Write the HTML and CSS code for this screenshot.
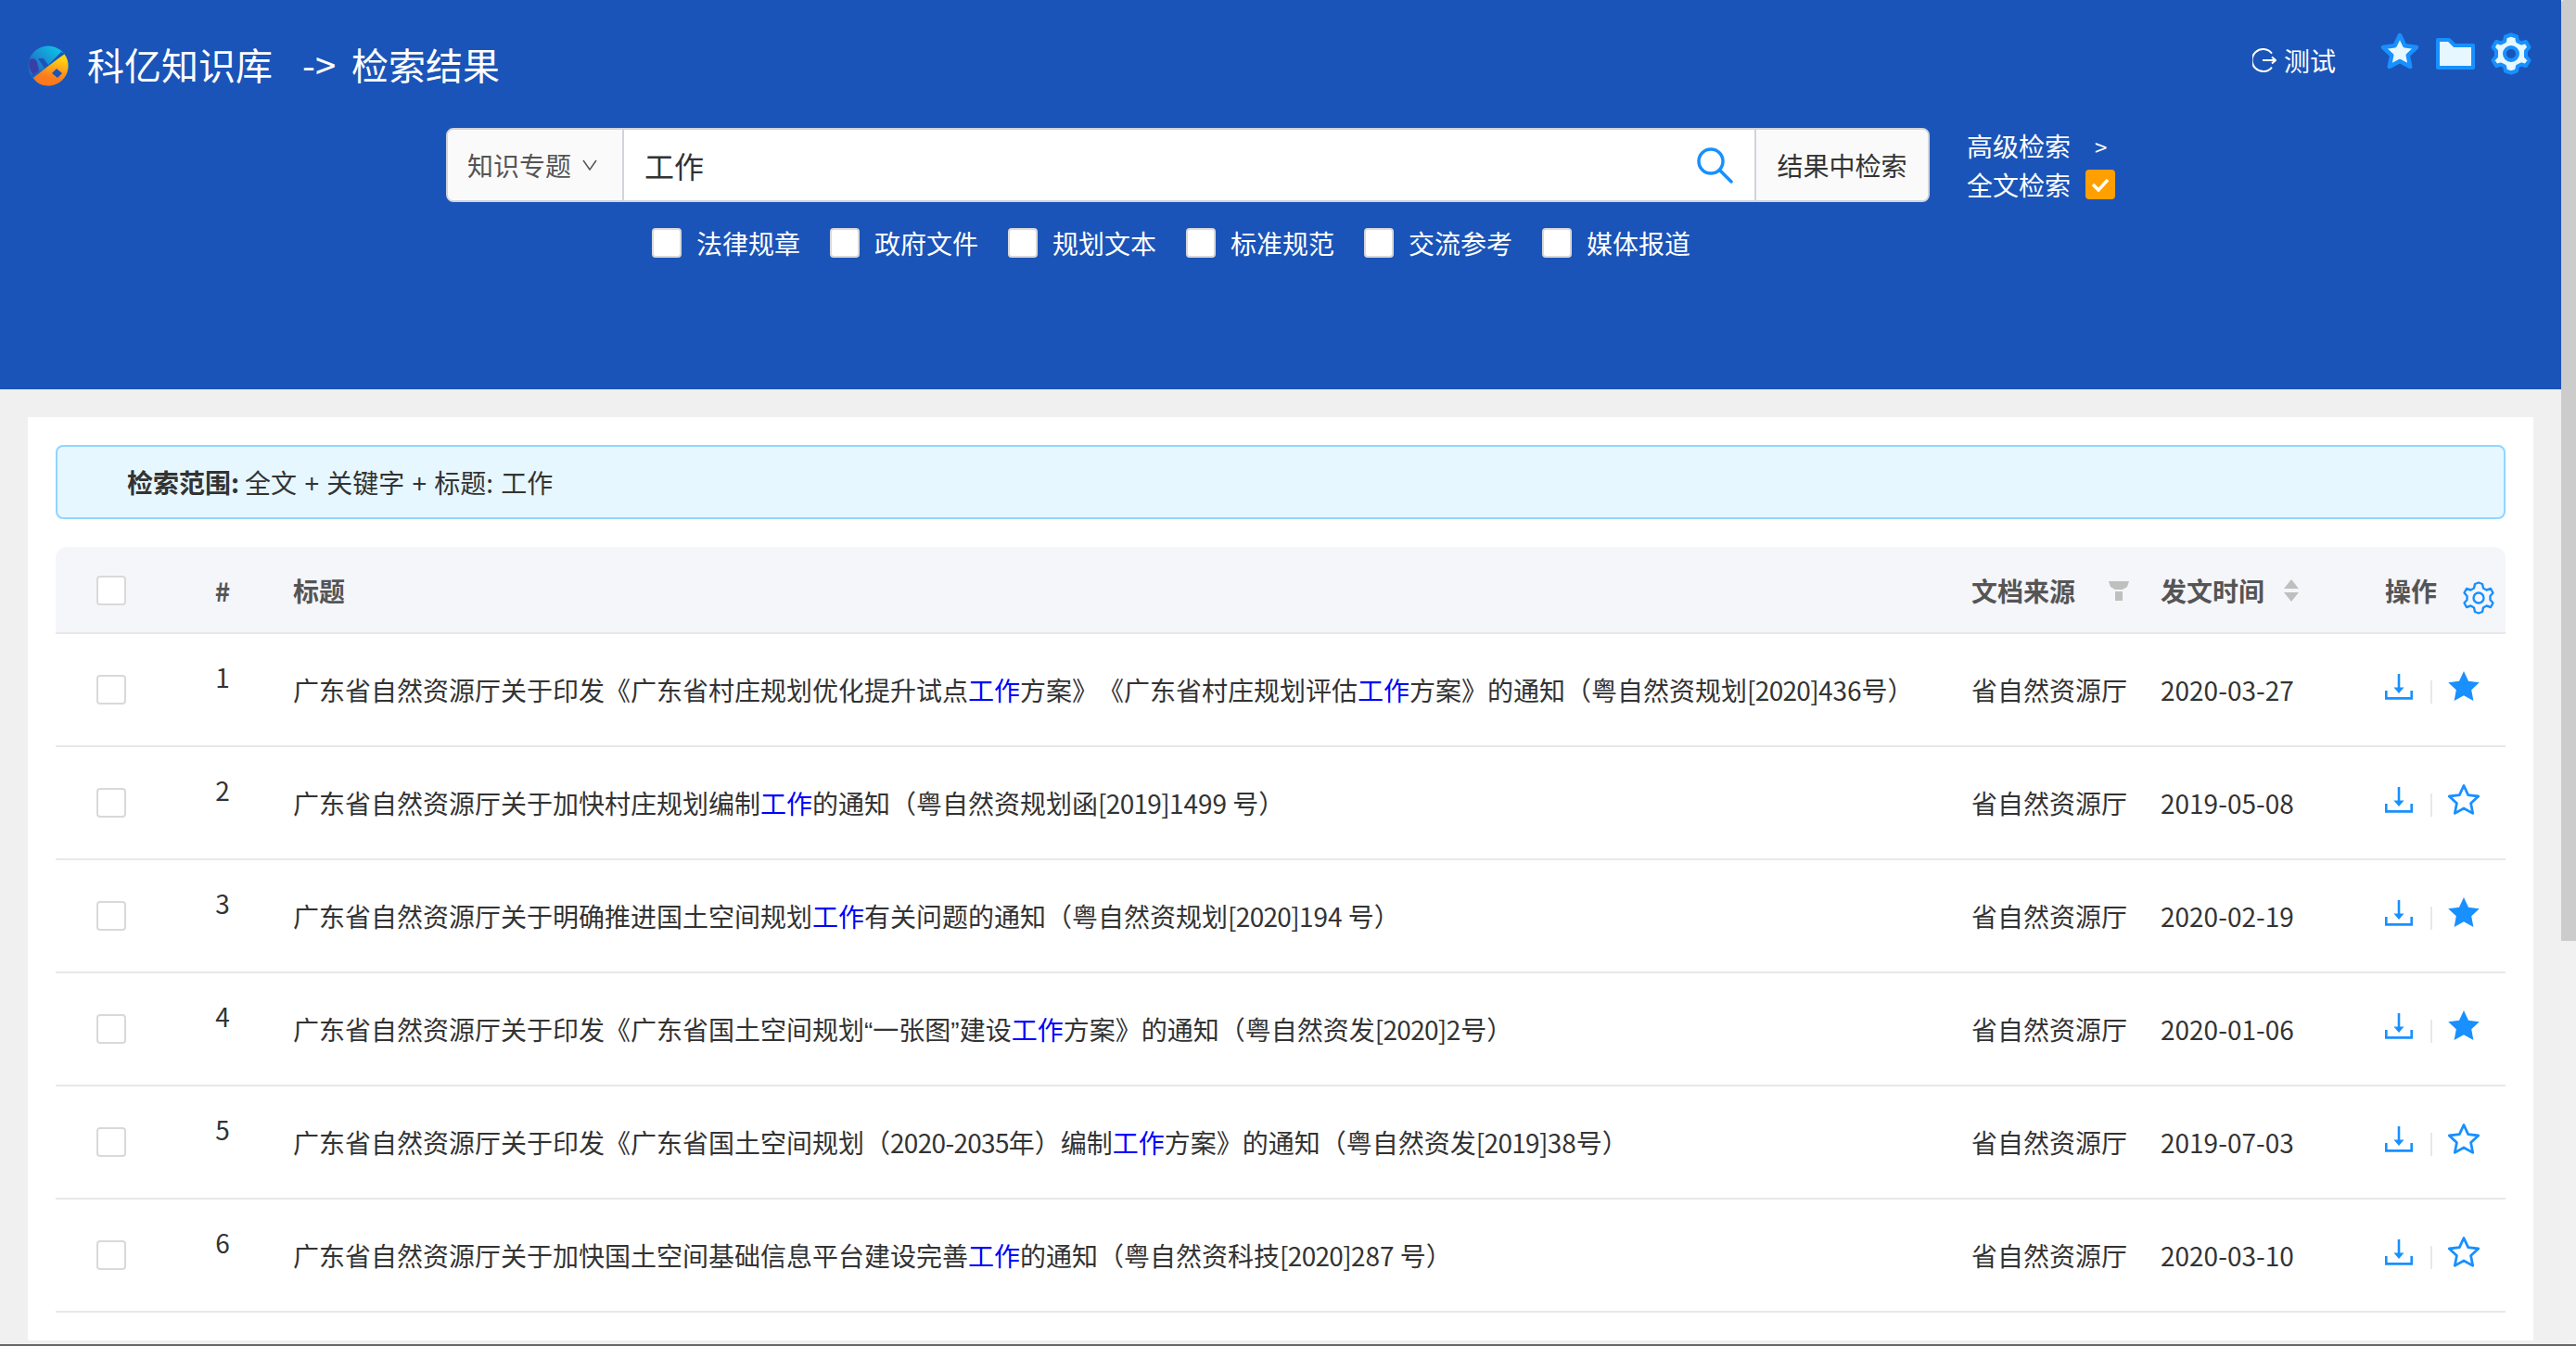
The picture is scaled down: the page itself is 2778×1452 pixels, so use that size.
FILE: index.html
```html
<!DOCTYPE html>
<html lang="zh-CN">

<head>
    <meta charset="utf-8">
    <title>科亿知识库 检索结果</title>
    <link rel="stylesheet" href="styles.css">
</head>

<body>
    <svg class="defs" width="0" height="0">
        <symbol id="dl" viewBox="0 0 30 28">
            <path d="M15 0V18" fill="none" stroke="currentColor" stroke-width="2.6"/>
            <path d="M9.5 14.5H20.5L15 21Z" fill="currentColor"/>
            <path d="M1.3 18V26.4H28.7V18" fill="none" stroke="currentColor" stroke-width="2.6"/>
        </symbol>
        <symbol id="star" viewBox="0 0 36 34">
            <path d="M18 2.5L22.7 12.6 33.7 14 25.6 21.5 27.7 32.4 18 27 8.3 32.4 10.4 21.5 2.3 14 13.3 12.6Z" fill="none" stroke="currentColor" stroke-width="2.8" stroke-linejoin="round"/>
        </symbol>
        <symbol id="starFill" viewBox="0 0 36 34">
            <path d="M18 1L23 11.7 34.800 13.200 26.200 21.200 28.400 33 18 27.200 7.600 33 9.800 21.200 1.200 13.200 13 11.700Z" fill="currentColor"/>
        </symbol>
    </svg>

    <div class="page">
        <div class="main">
            <header class="topbar">
                <div class="headRow">
                    <div class="brand">
                        <svg class="logo" viewBox="0 0 44 44">
                            <defs>
                                <linearGradient id="lgTop" x1="1" y1="0" x2="0" y2="1">
                                    <stop offset="0" stop-color="#08d8f0"/>
                                    <stop offset="0.7" stop-color="#1f6fc4"/>
                                </linearGradient>
                                <linearGradient id="lgBot" x1="0.7" y1="0" x2="0.4" y2="1">
                                    <stop offset="0.1" stop-color="#ffd412"/>
                                    <stop offset="0.75" stop-color="#fb7a1e"/>
                                </linearGradient>
                            </defs>
                            <circle cx="22" cy="22" r="21.500" fill="url(#lgTop)"/>
                            <path d="M39 9C42.500 13 43.500 18 43.500 22 43.500 34 34 43.500 22 43.500 14.500 43.500 9 40 6 35Z" fill="url(#lgBot)"/>
                            <path d="M1.500 16C5 13 8 14 10 18L12 27 6 31C2 28 0.500 22 1.500 16Z" fill="#3a3fa8"/>
                            <path d="M11 14L17 14 22 21 36 7 40 9 5 34 4 32 18 25Z" fill="#1b54b8"/>
                            <path d="M31 25L37 30 32 35 26 30Z" fill="#1b54b8"/>
                        </svg>
                        <span class="brandName">科亿知识库</span>
                        <span class="crumbArrow">-&gt;</span>
                        <span class="crumb">检索结果</span>
                    </div>
                    <div class="userBox">
                        <svg class="logout" viewBox="0 0 26 28">
                            <path d="M21 6.500A12 12 0 1 0 21 21.500" fill="none" stroke="#fff" stroke-width="2"/>
                            <path d="M11 14H25M21 10.500L25 14 21 17.500" fill="none" stroke="#fff" stroke-width="2"/>
                        </svg>
                        <span class="userName">测试</span>
                        <div class="toolIcons">
                            <svg class="toolStar" viewBox="0 0 44 42">
                                <path d="M22 3L27.400 14.300 40 16 30.800 24.600 33.200 37 22 31 10.800 37 13.200 24.600 4 16 16.600 14.300Z" fill="#e6f7ff" stroke="#1890ff" stroke-width="4.500" stroke-linejoin="round"/>
                            </svg>
                            <svg class="toolFolder" viewBox="0 0 42 34">
                                <path d="M2 2H14L20 8H40V32H2Z" fill="#e6f7ff" stroke="#1890ff" stroke-width="4" stroke-linejoin="round"/>
                            </svg>
                            <svg class="toolGear" viewBox="0 0 44 46">
                                <path d="M22 2.500L28 4.500 29 9.500 33 11.500 38 10 41.500 16 38 20V26L41.500 30 38 36 33 34.500 29 36.500 28 41.500 22 43.500 16 41.500 15 36.500 11 34.500 6 36 2.500 30 6 26V20L2.500 16 6 10 11 11.500 15 9.500 16 4.500Z" fill="#e6f7ff" stroke="#1890ff" stroke-width="4" stroke-linejoin="round"/>
                                <circle cx="22" cy="23" r="7" fill="#1b54b8" stroke="#1890ff" stroke-width="4"/>
                            </svg>
                        </div>
                    </div>
                </div>

                <div class="searchRow">
                    <div class="searchBox">
                        <div class="searchType">知识专题
                            <svg class="caret" viewBox="0 0 16 12">
                                <path d="M1 1L8 11 15 1" fill="none" stroke="#555" stroke-width="1.500"/>
                            </svg>
                        </div>
                        <div class="searchInput">
                            <span class="searchText">工作</span>
                            <svg class="searchIcon" viewBox="0 0 40 40">
                                <circle cx="16" cy="16" r="13" fill="none" stroke="#1890ff" stroke-width="3.500"/>
                                <path d="M25.500 25.500L38 38" fill="none" stroke="#1890ff" stroke-width="3.500" stroke-linecap="round"/>
                            </svg>
                        </div>
                        <div class="searchBtn">结果中检索</div>
                    </div>
                    <div class="searchLinks">
                        <div class="linkRow">高级检索<span class="gt">&gt;</span></div>
                        <div class="linkRow">全文检索
                            <span class="orangeCheck">
                                <svg viewBox="0 0 20 16"><path d="M2 8L8 14 18 3" fill="none" stroke="#fff" stroke-width="3.500"/></svg>
                            </span>
                        </div>
                    </div>
                </div>

                <div class="typeRow">
                    <label class="typeItem"><span class="box"></span>法律规章</label>
                    <label class="typeItem"><span class="box"></span>政府文件</label>
                    <label class="typeItem"><span class="box"></span>规划文本</label>
                    <label class="typeItem"><span class="box"></span>标准规范</label>
                    <label class="typeItem"><span class="box"></span>交流参考</label>
                    <label class="typeItem"><span class="box"></span>媒体报道</label>
                </div>
            </header>

            <section class="card">
                <div class="scope"><b>检索范围:</b> <span>全文 + 关键字 + 标题: 工作</span></div>

                <table class="results">
                    <colgroup>
                        <col class="colCheck">
                        <col class="colNum">
                        <col>
                        <col class="colSource">
                        <col class="colDate">
                        <col class="colOps">
                    </colgroup>
                    <thead>
                        <tr>
                            <th><span class="box rowBox"></span></th>
                            <th class="num">#</th>
                            <th>标题</th>
                            <th>
                                <div class="thInner">文档来源
                                    <svg class="filterIcon" viewBox="0 0 22 21">
                                        <path d="M0 0H22L20 6 15 9H7L2 6Z M7 11H15V21H7Z" fill="#bfbfbf"/>
                                    </svg>
                                </div>
                            </th>
                            <th>
                                <div class="thInner">发文时间
                                    <svg class="sortIcon" viewBox="0 0 16 24">
                                        <path d="M8 0L16 10H0Z M0 14H16L8 24Z" fill="#bfbfbf"/>
                                    </svg>
                                </div>
                            </th>
                            <th>
                                <div class="thInner">操作
                                    <svg class="tableGear" viewBox="0 0 34 36">
                                        <path d="M17 1.500L21 3 22 7.500 25.500 9.500 30 8 32.500 12.500 29.500 16V20L32.500 23.500 30 28 25.500 26.500 22 28.500 21 33 17 34.500 13 33 12 28.500 8.500 26.500 4 28 1.500 23.500 4.500 20V16L1.500 12.500 4 8 8.500 9.500 12 7.500 13 3Z" fill="none" stroke="#1890ff" stroke-width="2.400" stroke-linejoin="round"/>
                                        <circle cx="17" cy="18" r="5.500" fill="none" stroke="#1890ff" stroke-width="2.400"/>
                                    </svg>
                                </div>
                            </th>
                        </tr>
                    </thead>
                    <tbody>
                        <tr>
                            <td><span class="box rowBox"></span></td>
                            <td class="num">1</td>
                            <td>广东省自然资源厅关于印发《广东省村庄规划优化提升试点<em>工作</em>方案》《广东省村庄规划评估<em>工作</em>方案》的通知（粤自然资规划<span class="docNo">[2020]</span>436号）</td>
                            <td>省自然资源厅</td>
                            <td>2020-03-27</td>
                            <td><div class="ops"><svg class="opDl"><use href="#dl"/></svg><i class="opSep"></i><svg class="opStar"><use href="#starFill"/></svg></div></td>
                        </tr>
                        <tr>
                            <td><span class="box rowBox"></span></td>
                            <td class="num">2</td>
                            <td>广东省自然资源厅关于加快村庄规划编制<em>工作</em>的通知（粤自然资规划函<span class="docNo">[2019]</span>1499 号）</td>
                            <td>省自然资源厅</td>
                            <td>2019-05-08</td>
                            <td><div class="ops"><svg class="opDl"><use href="#dl"/></svg><i class="opSep"></i><svg class="opStar"><use href="#star"/></svg></div></td>
                        </tr>
                        <tr>
                            <td><span class="box rowBox"></span></td>
                            <td class="num">3</td>
                            <td>广东省自然资源厅关于明确推进国土空间规划<em>工作</em>有关问题的通知（粤自然资规划<span class="docNo">[2020]</span>194 号）</td>
                            <td>省自然资源厅</td>
                            <td>2020-02-19</td>
                            <td><div class="ops"><svg class="opDl"><use href="#dl"/></svg><i class="opSep"></i><svg class="opStar"><use href="#starFill"/></svg></div></td>
                        </tr>
                        <tr>
                            <td><span class="box rowBox"></span></td>
                            <td class="num">4</td>
                            <td>广东省自然资源厅关于印发《广东省国土空间规划<span class="narrowQuote">“</span>一张图<span class="narrowQuote">”</span>建设<em>工作</em>方案》的通知（粤自然资发<span class="docNo">[2020]</span>2号）</td>
                            <td>省自然资源厅</td>
                            <td>2020-01-06</td>
                            <td><div class="ops"><svg class="opDl"><use href="#dl"/></svg><i class="opSep"></i><svg class="opStar"><use href="#starFill"/></svg></div></td>
                        </tr>
                        <tr>
                            <td><span class="box rowBox"></span></td>
                            <td class="num">5</td>
                            <td>广东省自然资源厅关于印发《广东省国土空间规划（<span class="docNo">2020-2035</span>年）编制<em>工作</em>方案》的通知（粤自然资发<span class="docNo">[2019]</span>38号）</td>
                            <td>省自然资源厅</td>
                            <td>2019-07-03</td>
                            <td><div class="ops"><svg class="opDl"><use href="#dl"/></svg><i class="opSep"></i><svg class="opStar"><use href="#star"/></svg></div></td>
                        </tr>
                        <tr>
                            <td><span class="box rowBox"></span></td>
                            <td class="num">6</td>
                            <td>广东省自然资源厅关于加快国土空间基础信息平台建设完善<em>工作</em>的通知（粤自然资科技<span class="docNo">[2020]</span>287 号）</td>
                            <td>省自然资源厅</td>
                            <td>2020-03-10</td>
                            <td><div class="ops"><svg class="opDl"><use href="#dl"/></svg><i class="opSep"></i><svg class="opStar"><use href="#star"/></svg></div></td>
                        </tr>
                    </tbody>
                </table>
            </section>
        </div>

        <div class="scrollbar"><div class="thumb"></div></div>
    </div>
</body>

</html>
```

FILE: styles.css
```css
html, body {
    margin: 0;
    height: 100%;
    overflow: hidden;
}

body {
    font-family: "Noto Sans CJK SC", "Noto Sans", sans-serif;
    font-size: 28px;
    color: #333;
    background-color: #f0f0f0;
    text-spacing-trim: space-all;
}

.defs {
    display: block;
    height: 0;
}

.page {
    display: flex;
    height: 1450px;
    border-bottom: 2px solid #666;
    overflow: hidden;
}

.main {
    flex: 1;
    min-width: 0;
}

/* Fake page scrollbar */
.scrollbar {
    width: 16px;
    flex: none;
    background-color: #f1f1f1;
}

.thumb {
    height: 1015px;
    background-color: #ccc;
    border-top-left-radius: 4px;
}

/* Blue header */
.topbar {
    height: 420px;
    box-sizing: border-box;
    background-color: #1b54b8;
    color: #fff;
}

.headRow {
    display: flex;
    justify-content: space-between;
    height: 138px;
    box-sizing: border-box;
    padding-left: 30px;
    padding-right: 32px;
}

.brand {
    display: flex;
    align-items: center;
    height: 138px;
    font-size: 40px;
}

.logo {
    width: 44px;
    height: 44px;
    margin-right: 20px;
    margin-top: 4px;
}

.crumbArrow {
    margin-left: 32px;
    margin-right: 17px;
}

.userBox {
    display: flex;
    align-items: flex-start;
}

.logout {
    width: 26px;
    height: 28px;
    margin-top: 51px;
    margin-right: 8px;
}

.userName {
    margin-top: 44px;
    line-height: 42px;
}

.toolIcons {
    display: flex;
    align-items: flex-start;
    margin-left: 47px;
}

.toolStar {
    width: 44px;
    height: 42px;
    margin-top: 35px;
}

.toolFolder {
    width: 42px;
    height: 34px;
    margin-top: 41px;
    margin-left: 17px;
}

.toolGear {
    width: 44px;
    height: 46px;
    margin-top: 35px;
    margin-left: 17px;
}

/* Search */
.searchRow {
    display: flex;
    padding-left: 481px;
}

.searchBox {
    display: flex;
    width: 1600px;
    height: 80px;
    box-sizing: border-box;
    border: 2px solid #d2d4dc;
    border-radius: 8px;
    overflow: hidden;
    background-color: #fff;
    color: #333;
}

.searchType {
    display: flex;
    align-items: center;
    width: 190px;
    box-sizing: border-box;
    padding-left: 21px;
    border-right: 2px solid #d2d4dc;
    background-color: #fafafa;
    color: #555;
}

.caret {
    width: 16px;
    height: 12px;
    margin-left: 12px;
}

.searchInput {
    flex: 1;
    display: flex;
    align-items: center;
    justify-content: space-between;
    padding-left: 22px;
    padding-right: 23px;
    font-size: 32px;
}

.searchIcon {
    width: 40px;
    height: 40px;
}

.searchBtn {
    display: flex;
    align-items: center;
    justify-content: center;
    width: 185px;
    border-left: 2px solid #d2d4dc;
    background-color: #fafafa;
}

.searchLinks {
    margin-left: 40px;
    margin-top: -2px;
}

.linkRow {
    display: flex;
    align-items: center;
    height: 42px;
}

.gt {
    margin-left: 26px;
    font-size: 24px;
}

.orangeCheck {
    display: flex;
    align-items: center;
    justify-content: center;
    width: 32px;
    height: 32px;
    margin-left: 16px;
    border-radius: 4px;
    background-color: #ff9f00;
}

.orangeCheck svg {
    width: 20px;
    height: 16px;
}

.typeRow {
    display: flex;
    gap: 32px;
    margin-top: 24px;
    padding-left: 703px;
}

.typeItem {
    display: flex;
    align-items: center;
    gap: 16px;
    line-height: 36px;
}

.box {
    display: inline-block;
    width: 32px;
    height: 32px;
    box-sizing: border-box;
    border: 2px solid #d9d9d9;
    border-radius: 4px;
    background-color: #fff;
}

/* White card */
.card {
    margin-left: 30px;
    margin-right: 30px;
    margin-top: 30px;
    padding: 30px;
    background-color: #fff;
}

.scope {
    display: flex;
    align-items: center;
    gap: 6px;
    height: 80px;
    box-sizing: border-box;
    padding-left: 75px;
    border: 2px solid #91d5ff;
    border-radius: 8px;
    background-color: #e6f7ff;
    word-spacing: 2px;
}

.results {
    width: 100%;
    margin-top: 30px;
    border-collapse: separate;
    border-spacing: 0;
    table-layout: fixed;
}

.colCheck, .colNum {
    width: 120px;
}

.colSource {
    width: 204px;
}

.colDate {
    width: 242px;
}

.colOps {
    width: 146px;
}

.results th, .results td {
    box-sizing: border-box;
    padding: 0 16px;
    border-bottom: 2px solid #e8e8e8;
    text-align: left;
    white-space: nowrap;
}

.results th {
    height: 94px;
    padding-top: 2px;
    background-color: #f5f6fa;
    color: #555;
    font-weight: bold;
}

.results th:first-child {
    border-top-left-radius: 12px;
}

.results th:last-child {
    border-top-right-radius: 12px;
    padding-right: 0;
}

.results td {
    height: 122px;
}

.results th:first-child, .results td:first-child, .results .num {
    text-align: center;
}

.results td.num {
    padding-bottom: 28px;
}

.rowBox {
    display: block;
    margin: 0 auto;
}

.results em {
    font-style: normal;
    color: #00f;
}

.narrowQuote {
    font-family: "Liberation Sans", sans-serif;
}

.docNo {
    letter-spacing: -0.7px;
}

.thInner {
    display: flex;
    align-items: center;
}

.filterIcon {
    width: 22px;
    height: 21px;
    margin-left: 36px;
    flex: none;
}

.sortIcon {
    width: 16px;
    height: 24px;
    margin-left: 21px;
    flex: none;
}

.tableGear {
    width: 34px;
    height: 36px;
    margin-left: 28px;
    margin-top: 8px;
    margin-bottom: -8px;
    flex: none;
}

.ops {
    display: flex;
    align-items: center;
    color: #1890ff;
}

.opDl {
    width: 30px;
    height: 28px;
    margin-bottom: 6px;
}

.opSep {
    width: 2px;
    height: 25px;
    margin-left: 19px;
    margin-right: 16px;
    margin-top: 4px;
    background-color: #e8e8e8;
}

.opStar {
    width: 36px;
    height: 34px;
    margin-bottom: 8px;
}
```
